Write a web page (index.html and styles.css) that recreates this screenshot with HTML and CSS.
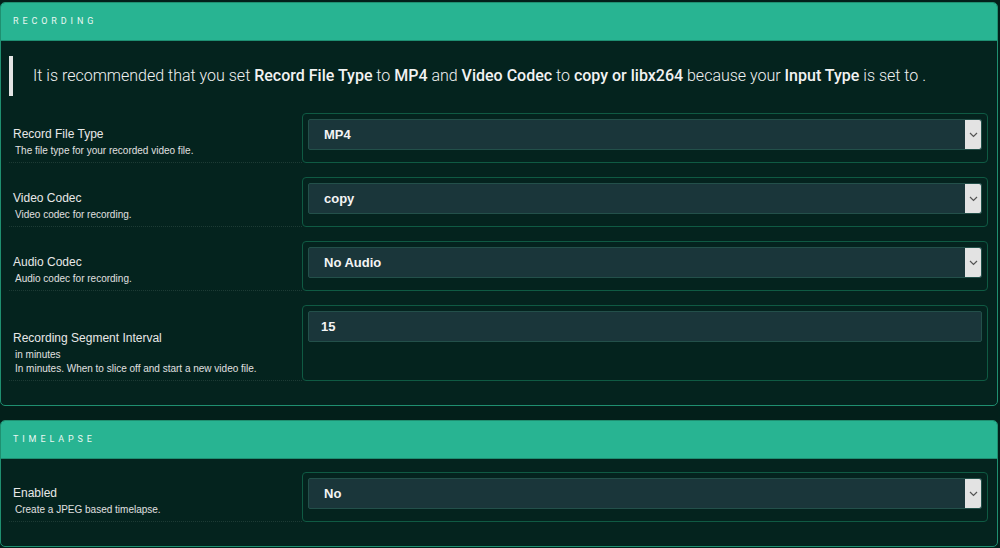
FILE: index.html
```html
<!DOCTYPE html>
<html lang="en">
<head>
    <meta charset="UTF-8">
    <meta name="viewport" content="width=device-width, initial-scale=1.0">
    <title>Monitor Settings</title>
    <link rel="stylesheet" href="styles.css">
</head>
<body>
    <main class="settings">
        <section class="panel">
            <header class="panel-head">RECORDING</header>
            <div class="panel-body">
                <div class="callout">
                    It is recommended that you set <b>Record File Type</b> to <b>MP4</b> and <b>Video Codec</b> to <b>copy or libx264</b> because your <b>Input Type</b> is set to .
                </div>

                <div class="row">
                    <div class="label">
                        <span class="title">Record File Type</span>
                        <small>The file type for your recorded video file.</small>
                    </div>
                    <div class="control">
                        <div class="select">MP4<span class="arrow"><svg width="9" height="6" viewBox="0 0 9 6"><path d="M1 1l3.5 3.5L8 1" fill="none" stroke="#555" stroke-width="1.2"/></svg></span></div>
                    </div>
                </div>

                <div class="row">
                    <div class="label">
                        <span class="title">Video Codec</span>
                        <small>Video codec for recording.</small>
                    </div>
                    <div class="control">
                        <div class="select">copy<span class="arrow"><svg width="9" height="6" viewBox="0 0 9 6"><path d="M1 1l3.5 3.5L8 1" fill="none" stroke="#555" stroke-width="1.2"/></svg></span></div>
                    </div>
                </div>

                <div class="row">
                    <div class="label">
                        <span class="title">Audio Codec</span>
                        <small>Audio codec for recording.</small>
                    </div>
                    <div class="control">
                        <div class="select">No Audio<span class="arrow"><svg width="9" height="6" viewBox="0 0 9 6"><path d="M1 1l3.5 3.5L8 1" fill="none" stroke="#555" stroke-width="1.2"/></svg></span></div>
                    </div>
                </div>

                <div class="row">
                    <div class="label">
                        <span class="title">Recording Segment Interval</span>
                        <small>in minutes</small>
                        <small>In minutes. When to slice off and start a new video file.</small>
                    </div>
                    <div class="control tall">
                        <div class="input">15</div>
                    </div>
                </div>
            </div>
        </section>

        <section class="panel">
            <header class="panel-head">TIMELAPSE</header>
            <div class="panel-body">
                <div class="row">
                    <div class="label">
                        <span class="title">Enabled</span>
                        <small>Create a JPEG based timelapse.</small>
                    </div>
                    <div class="control">
                        <div class="select">No<span class="arrow"><svg width="9" height="6" viewBox="0 0 9 6"><path d="M1 1l3.5 3.5L8 1" fill="none" stroke="#555" stroke-width="1.2"/></svg></span></div>
                    </div>
                </div>
            </div>
        </section>
    </main>
</body>
</html>
```

FILE: styles.css
```css
body{
    margin: 0;
    background-color: #031f1a;
    font-family: "Liberation Sans", Arial, sans-serif;
    color: #ececec;
    overflow: hidden;
}

.settings{
    padding-top: 2px;
    width: 998px;
}

.panel{
    border: 1px solid #1f8f70;
    border-radius: 5px;
    background-color: #04231e;
    margin-bottom: 14px;
    overflow: hidden;
}

.panel-head{
    background-color: #28b492;
    height: 37px;
    line-height: 37px;
    padding-left: 12px;
    font-family: Roboto, sans-serif;
    font-size: 9px;
    letter-spacing: 3.9px;
    color: #eaf7f2;
    border-bottom: 1px solid #1e8f72;
}

.panel-body{
    padding: 13px 8px 10px 8px;
}

.callout{
    border-left: 4px solid #e4e4e4;
    padding: 10px 0 10px 20px;
    margin-top: 2px;
    font-family: Roboto, sans-serif;
    font-weight: 300;
    font-size: 16px;
    line-height: 20px;
    color: #f2f2f2;
    margin-bottom: 17px;
}

.callout b{
    font-weight: 500;
}

/* setting rows */

.row{
    display: flex;
    margin-bottom: 14px;
}

.label{
    width: 289px;
    display: flex;
    flex-direction: column;
    justify-content: flex-end;
    padding: 0 0 4px 4px;
    border-bottom: 1px dotted #1d3b35;
}

.title{
    font-size: 12px;
    line-height: 16px;
    color: #e8e8e8;
}

.label small{
    font-size: 10px;
    line-height: 14px;
    padding-left: 2px;
    color: #e0e0e0;
}

.title + small{
    margin-top: 2px;
}

.control{
    flex: 1;
    border: 1px solid #0f5a43;
    border-radius: 4px;
    padding: 5px 5px 12px 5px;
    margin-right: 1px;
}

.control.tall{
    padding-bottom: 38px;
}

.select, .input{
    display: flex;
    align-items: center;
    height: 29px;
    background-color: #1a363a;
    border: 1px solid #23504a;
    border-radius: 2px;
    padding-left: 15px;
    font-size: 13px;
    font-weight: bold;
    color: #f4f4f4;
}

.input{
    padding-left: 12px;
}

.arrow{
    margin-left: auto;
    width: 16px;
    height: 29px;
    background-color: #e3e3e3;
    border-radius: 0 2px 2px 0;
    display: flex;
    align-items: center;
    justify-content: center;
}
```
